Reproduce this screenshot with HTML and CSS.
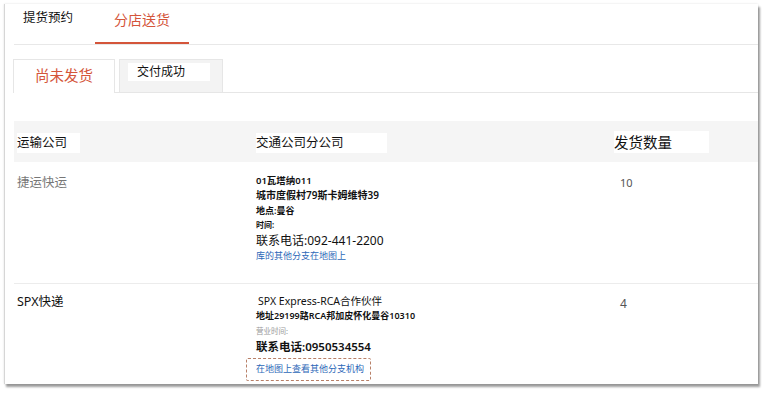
FILE: index.html
```html
<!DOCTYPE html>
<html lang="zh-CN">
<head>
    <meta charset="UTF-8">
    <meta name="viewport" content="width=device-width, initial-scale=1.0">
    <title>分店送货</title>
    <link rel="stylesheet" href="styles.css">
</head>
<body>
    <div class="order-card">
        <div class="main-tabs">
            <div class="main-tab">提货预约</div>
            <div class="main-tab active">分店送货</div>
        </div>

        <div class="sub-tabs">
            <div class="sub-tab active">尚未发货</div>
            <div class="sub-tab"><span class="sub-tab-label">交付成功</span></div>
        </div>

        <div class="ship-table">
            <div class="ship-row ship-head">
                <div class="cell col-company"><span class="head-label w-company">运输公司</span></div>
                <div class="cell col-branch"><span class="head-label w-branch">交通公司分公司</span></div>
                <div class="cell col-qty"><span class="head-label head-big w-qty">发货数量</span></div>
            </div>

            <div class="ship-row row-first">
                <div class="cell col-company"><span class="company-name muted">捷运快运</span></div>
                <div class="cell col-branch">
                    <div class="line l-code">01瓦塔纳011</div>
                    <div class="line l-street">城市度假村79斯卡姆维特39</div>
                    <div class="line l-place">地点:曼谷</div>
                    <div class="line l-time">时间:</div>
                    <div class="line l-phone">联系电话:092-441-2200</div>
                    <a class="line l-link" href="#">库的其他分支在地图上</a>
                </div>
                <div class="cell col-qty"><span class="qty">10</span></div>
            </div>

            <div class="ship-row row-second">
                <div class="cell col-company"><span class="company-name">SPX快递</span></div>
                <div class="cell col-branch">
                    <div class="line l-partner">SPX Express-RCA合作伙伴</div>
                    <div class="line l-address">地址29199路RCA邦加皮怀化曼谷10310</div>
                    <div class="line l-hours">营业时间:</div>
                    <div class="line l-phone2">联系电话:0950534554</div>
                    <div class="map-box"><a class="l-link" href="#">在地图上查看其他分支机构</a></div>
                </div>
                <div class="cell col-qty"><span class="qty qty-second">4</span></div>
            </div>
        </div>
    </div>
</body>
</html>
```

FILE: styles.css
```css
body {
    margin: 0;
    min-height: 396px;
    background: #fff;
    font-family: "Noto Sans", "Noto Sans CJK SC", sans-serif;
    color: #222;
}

.order-card {
    margin: 4px 0 12px 4px;
    width: 754px;
    height: 380px;
    padding-left: 9px;
    box-sizing: border-box;
    background: #fff;
    border-left: 1px solid #d6d6d6;
    box-shadow: 0 0 2px rgba(0, 0, 0, 0.12), 2px 3px 2px rgba(0, 0, 0, 0.38);
}

.main-tabs {
    display: flex;
    height: 40px;
    border-bottom: 1px solid #e8e8e8;
}

.main-tab {
    box-sizing: border-box;
    padding-top: 5px;
    font-size: 12.5px;
    line-height: 18px;
    color: #111;
}

.main-tab:first-child {
    width: 81px;
    padding-left: 9px;
}

.main-tab.active {
    width: 94px;
    padding-top: 7px;
    text-align: center;
    font-size: 14px;
    color: #d4553a;
    border-bottom: 2px solid #d4553a;
}

.sub-tabs {
    display: flex;
    margin-top: 14px;
    height: 33px;
    border-bottom: 1px solid #e6e6e6;
}

.sub-tab {
    box-sizing: border-box;
    height: 34px;
    border: 1px solid #e6e6e6;
    border-bottom: none;
}

.sub-tab.active {
    width: 102px;
    margin-left: -1px;
    padding: 5px 0 0 21px;
    font-size: 14.5px;
    line-height: 20px;
    color: #d4553a;
    background: #fff;
}

.sub-tab:not(.active) {
    width: 104px;
    height: 33px;
    margin-left: 4px;
    padding: 3px 0 0 8px;
    background: #f3f3f3;
}

.sub-tab-label {
    display: block;
    width: 82px;
    height: 18px;
    padding-left: 9px;
    box-sizing: border-box;
    background: #fff;
    font-size: 12px;
    line-height: 18px;
    color: #111;
}

.ship-table {
    margin-top: 28px;
}

.ship-row {
    display: flex;
    border-bottom: 1px solid #ececec;
}

.cell {
    box-sizing: border-box;
}

.col-company {
    width: 233px;
    padding-left: 3px;
}

.col-branch {
    width: 358px;
    padding-left: 9px;
}

.col-qty {
    flex: 1;
    padding-left: 9px;
}

.ship-head {
    height: 41px;
    background: #f5f5f5;
    border-bottom: none;
    align-items: center;
}

.head-label {
    display: inline-block;
    background: #fff;
    font-size: 12.5px;
    line-height: 20px;
    color: #111;
}

.w-company { width: 63px; }
.w-branch { width: 131px; }
.w-qty { width: 95px; }

.head-big {
    font-size: 14.5px;
    line-height: 22px;
}

.row-first {
    height: 121px;
}

.row-second {
    height: 99px;
    border-bottom: none;
}

.row-first .cell {
    padding-top: 12px;
}

.row-second .cell {
    padding-top: 10px;
}

.company-name {
    display: block;
    font-size: 12.5px;
    line-height: 16px;
    color: #111;
}

.row-first .company-name {
    margin-top: 1px;
}

.muted {
    color: #777;
}

.qty {
    display: block;
    padding-left: 6px;
    margin-top: 2px;
    font-size: 11px;
    line-height: 14px;
    color: #555;
}

.qty-second {
    margin-top: 3px;
    font-size: 12px;
}

.line {
    display: block;
    white-space: nowrap;
    color: #111;
}

.l-code { font-size: 9.5px; line-height: 14px; font-weight: 600; }
.l-street { font-size: 10px; line-height: 15px; font-weight: 600; }
.l-place { font-size: 9px; line-height: 15px; font-weight: 600; }
.l-time { font-size: 8px; line-height: 14px; font-weight: 600; }
.l-phone { font-size: 12px; line-height: 17px; }
.l-partner { font-size: 10.5px; line-height: 14px; padding-left: 2px; }
.l-address { font-size: 9px; line-height: 16px; font-weight: 600; }
.l-hours { font-size: 7.5px; line-height: 14px; color: #999; }
.l-phone2 { font-size: 11.5px; line-height: 18px; font-weight: 600; }

.l-link {
    font-size: 9px;
    line-height: 14px;
    color: #2c68b8;
    text-decoration: none;
}

.map-box {
    width: 125px;
    height: 23px;
    margin: 2px 0 0 -10px;
    padding: 3px 0 0 9px;
    box-sizing: border-box;
    border: 1.5px dashed #b88068;
    border-radius: 2px;
    font-size: 9px;
    line-height: 14px;
}
```
